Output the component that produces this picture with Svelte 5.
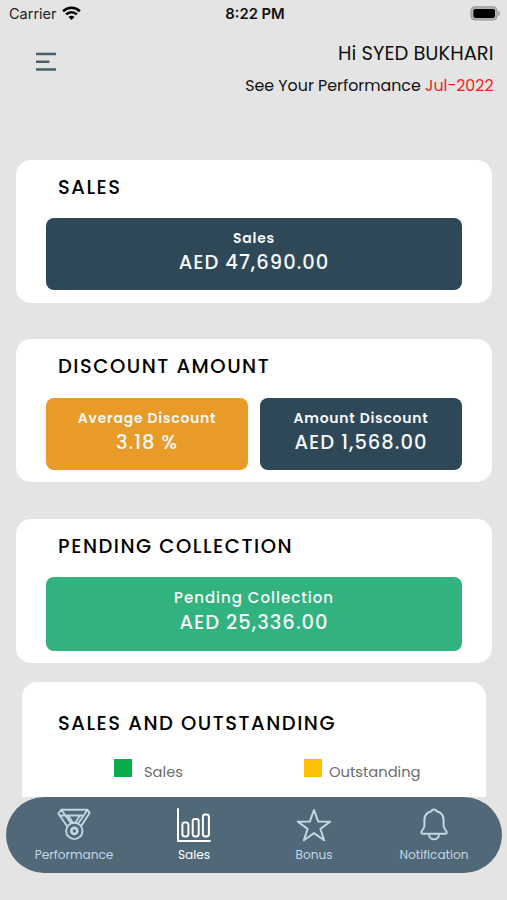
<script lang="ts">
  type Tile = { label: string; value: string; tone: string; key: string }
  type Card = { title: string; key: string; tiles: Tile[] }

  const cards: Card[] = [
    {
      title: 'SALES',
      key: 'sales-card',
      tiles: [{ label: 'Sales', value: 'AED 47,690.00', tone: 'navy', key: 'total' }]
    },
    {
      title: 'DISCOUNT AMOUNT',
      key: 'discount',
      tiles: [
        { label: 'Average Discount', value: '3.18 %', tone: 'orange', key: 'average' },
        { label: 'Amount Discount', value: 'AED 1,568.00', tone: 'navy', key: 'amount' }
      ]
    },
    {
      title: 'PENDING COLLECTION',
      key: 'pending',
      tiles: [{ label: 'Pending Collection', value: 'AED 25,336.00', tone: 'green', key: 'collection' }]
    }
  ]

  const tabs = ['Performance', 'Sales', 'Bonus', 'Notification']
  let active = $state('Sales')
</script>

<div class="screen">
  <div class="status-bar">
    <div class="carrier">
      <span>Carrier</span>
      <svg width="19" height="15" viewBox="0 0 19 15" fill="none" stroke="#000" stroke-width="2.6">
        <path d="M1.1 5.2C5.8 .6 13.2 .6 17.9 5.2" />
        <path d="M4.1 8.4C7.1 5.5 11.9 5.5 14.9 8.4" />
        <path d="M6.5 11C8.2 9.3 10.8 9.3 12.5 11L9.5 14Z" fill="#000" stroke="none" />
      </svg>
    </div>
    <span class="clock">8:22 PM</span>
    <div class="battery">
      <svg width="31" height="15" viewBox="0 0 31 15">
        <rect x="1" y=".9" width="26" height="13" rx="4" fill="#b4b4b4" stroke="#999" stroke-width="1.2" />
        <rect x="3.4" y="2.9" width="21.6" height="9" rx="1.8" fill="#000" />
        <path d="M28.2 5v5c2.3-.8 2.3-4.2 0-5z" fill="#999" />
      </svg>
    </div>
  </div>

  <header class="header">
    <button class="menu" aria-label="Menu">
      <svg width="20" height="19" viewBox="0 0 20 19" fill="#47606c">
        <rect x="0" y=".7" width="20" height="2.5" />
        <rect x="0" y="8.5" width="13.4" height="2.5" />
        <rect x="0" y="16.2" width="20" height="2.5" />
      </svg>
    </button>
    <div class="greeting">
      <h1>Hi SYED BUKHARI</h1>
      <p><span>See Your Performance</span> <span class="month">Jul-2022</span></p>
    </div>
  </header>

  <main class="content">
    {#each cards as card}
      <section class="card {card.key}">
        <h2>{card.title}</h2>
        <div class="tiles">
          {#each card.tiles as tile}
            <div class="tile {tile.tone} {tile.key}">
              <span class="label">{tile.label}</span>
              <span class="value">{tile.value}</span>
            </div>
          {/each}
        </div>
      </section>
    {/each}

    <section class="card chart">
      <h2>SALES AND OUTSTANDING</h2>
      <div class="legend">
        <div class="legend-item"><i class="swatch sales-color"></i><span>Sales</span></div>
        <div class="legend-item second"><i class="swatch outstanding-color"></i><span>Outstanding</span></div>
      </div>
    </section>
  </main>

  <nav class="tab-bar">
    {#each tabs as tab}
      <button class="tab" class:active={active === tab} onclick={() => (active = tab)}>
        <svg width="36" height="36" viewBox="0 0 36 36" fill="none" stroke="currentColor" stroke-width="2" stroke-linejoin="round" stroke-linecap="round">
          {#if tab === 'Performance'}
            <g stroke-width="1.9">
              <path d="M5.3 2.8h26.2l2.1 3.1-8.1 12.6M5.3 2.8L2.3 6.5l8.5 12.3M4 8.5h22.5M5.5 3L15 16.3M31.4 3l-8.8 12.8M12.2 8.8l4.9 7.2M23.7 8.8l-4.4 7" />
              <circle cx="18.3" cy="23.9" r="8.2" />
              <circle cx="18.3" cy="23.9" r="3" stroke-width="2.6" />
            </g>
          {:else if tab === 'Sales'}
            <path d="M2 2v32h32" />
            <rect x="6.4" y="15.5" width="6" height="14" rx="2.4" />
            <rect x="16.7" y="12" width="6" height="17.5" rx="2.4" />
            <rect x="26.9" y="7.5" width="6" height="22" rx="2.4" />
          {:else if tab === 'Bonus'}
            <path d="M18 3l4.2 11.6 12 .1-9.8 7.2 3.7 11.4L18 26.1 7.9 33.3l3.7-11.4L1.8 14.7l12-.1z" />
          {:else}
            <path d="M15.4 4.2c.6-2.3 4.6-2.3 5.2 0 4.3 1.1 7 4.5 7 9v5.3c0 2 .8 3.3 2 4.6 1.8 2 1.4 3.7-.9 3.7H7.3c-2.3 0-2.7-1.7-.9-3.7 1.2-1.3 2-2.6 2-4.6v-5.3c0-4.5 2.7-7.9 7-9z" />
            <path d="M13 27c0 7 10 7 10 0" />
          {/if}
        </svg>
        <span>{tab}</span>
      </button>
    {/each}
  </nav>
</div>

<style>
  :global(body) {
    margin: 0;
    background: #e4e4e4;
  }

  .screen {
    display: flex;
    flex-direction: column;
    height: 900px;
    overflow: hidden;
    background: #e4e4e4;
    color: #111;
    font-family: Poppins, Inter, 'Open Sans', sans-serif;
    box-sizing: border-box;
    padding-bottom: 27px;
  }

  h1,
  h2,
  p {
    margin: 0;
    font-weight: 400;
  }

  button {
    border: 0;
    padding: 0;
    background: none;
    font: inherit;
    color: inherit;
  }

  .status-bar {
    display: grid;
    grid-template-columns: 1fr auto 1fr;
    align-items: center;
    height: 27px;
    padding: 0 6px 0 9px;
    font-family: Inter, sans-serif;
    font-size: 14.5px;
    box-sizing: border-box;
    flex-shrink: 0;
  }

  .carrier {
    display: flex;
    align-items: center;
    gap: 5px;
    color: #222;
  }

  .clock {
    font-weight: 600;
    font-size: 14.8px;
  }

  .battery {
    display: flex;
    justify-content: flex-end;
  }

  .header {
    display: flex;
    justify-content: space-between;
    height: 132.5px;
    padding: 12px 13.5px 0 36px;
    box-sizing: border-box;
    flex-shrink: 0;
  }

  .menu {
    display: flex;
    align-self: flex-start;
    padding-top: 13px;
  }

  .greeting {
    text-align: right;
    white-space: nowrap;
  }

  .greeting h1 {
    padding-top: 1px;
    font-size: 19.5px;
    line-height: 28px;
  }

  .greeting p {
    margin-top: 5px;
    font-size: 15.85px;
    line-height: 26px;
  }

  .month {
    color: #f5201d;
  }

  .content {
    display: flex;
    flex-direction: column;
    flex: 1;
    min-height: 0;
    overflow: hidden;
    padding: 0 15px 0 16px;
  }

  .card {
    flex-shrink: 0;
    height: 143px;
    margin-bottom: 36.5px;
    padding: 14px 30px 0;
    border-radius: 15px;
    background: #fff;
    box-sizing: border-box;
  }

  .card h2 {
    padding-left: 12px;
    font-size: 19.5px;
    font-weight: 500;
    line-height: 28px;
    letter-spacing: 1.53px;
    color: #000;
    white-space: nowrap;
  }

  .pending {
    height: 144px;
    margin-bottom: 19px;
  }

  .tiles {
    display: flex;
    gap: 12px;
    margin-top: 16.5px;
  }

  .tile {
    display: flex;
    flex: 1;
    flex-direction: column;
    align-items: center;
    height: 72px;
    padding-top: 10px;
    border-radius: 8px;
    box-sizing: border-box;
    color: #f5f9fb;
    white-space: nowrap;
  }

  .navy {
    background: #2f4858;
  }

  .orange {
    background: #e99b28;
  }

  .green {
    background: #31b27f;
  }

  .label {
    font-size: 14px;
    font-weight: 600;
    line-height: 20px;
    letter-spacing: 0.75px;
  }

  .value {
    font-size: 19.5px;
    font-weight: 500;
    line-height: 30px;
    letter-spacing: 1px;
  }

  .collection {
    height: 73.5px;
    padding-top: 11px;
  }

  .collection .label {
    font-size: 15px;
    font-weight: 500;
    letter-spacing: 1px;
  }

  .chart {
    height: 300px;
    margin: 0 6px;
    padding: 28px 24px 0;
    border-radius: 15px 15px 0 0;
  }

  .legend {
    display: grid;
    grid-template-columns: 190px auto;
    padding: 20px 0 0 68px;
  }

  .legend-item {
    display: flex;
    gap: 12px;
    font-size: 14.7px;
    line-height: 28px;
    color: #6b6b6b;
  }

  .second {
    gap: 7px;
  }

  .swatch {
    width: 18px;
    height: 18px;
    margin-top: 1px;
  }

  .sales-color {
    background: #09ad48;
  }

  .outstanding-color {
    background: #fdc005;
  }

  .tab-bar {
    display: grid;
    grid-template-columns: repeat(4, 120px);
    justify-content: center;
    height: 76px;
    margin: 0 5px 0 6px;
    border-radius: 38px;
    background: #506878;
    flex-shrink: 0;
  }

  .tab {
    display: flex;
    flex-direction: column;
    align-items: center;
    padding-top: 10px;
    font-size: 12.1px;
    line-height: 20px;
    color: #c3d6e3;
  }

  .tab span {
    margin-top: 2px;
  }

  .tab.active {
    color: #fff;
  }
</style>
